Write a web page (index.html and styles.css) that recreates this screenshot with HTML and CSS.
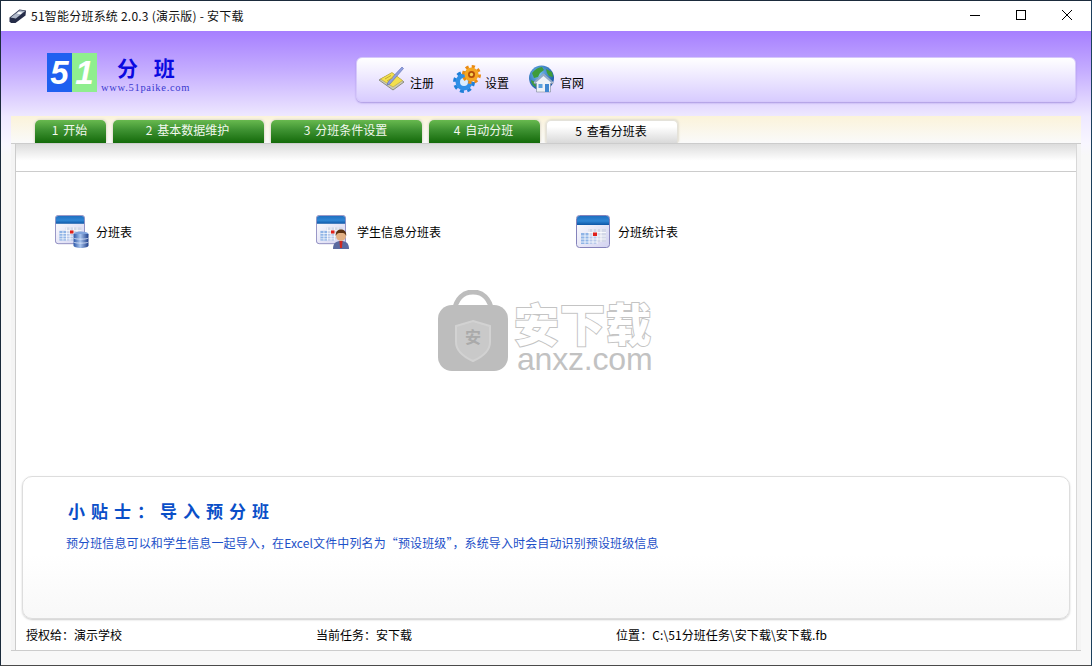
FILE: index.html
```html
<!DOCTYPE html>
<html lang="zh-CN">
<head>
<meta charset="utf-8">
<title>51智能分班系统</title>
<link rel="stylesheet" href="styles.css">
</head>
<body>
<svg class="defs" width="0" height="0" aria-hidden="true">
  <defs>
    <linearGradient id="calHead" x1="0" y1="0" x2="0" y2="1"><stop offset="0" stop-color="#1f6fc0"/><stop offset=".55" stop-color="#2f86d4"/><stop offset="1" stop-color="#0d56a6"/></linearGradient>
    <linearGradient id="calBody" x1="0" y1="0" x2="1" y2="1"><stop offset="0" stop-color="#ffffff"/><stop offset="1" stop-color="#d2d2f0"/></linearGradient>
    <linearGradient id="db" x1="0" y1="0" x2="1" y2="0"><stop offset="0" stop-color="#2b57a8"/><stop offset=".45" stop-color="#a8c4ee"/><stop offset="1" stop-color="#1f3f8a"/></linearGradient>
    <radialGradient id="globe" cx=".4" cy=".35" r=".7"><stop offset="0" stop-color="#7cc4f4"/><stop offset="1" stop-color="#0f4f9e"/></radialGradient>
    <symbol id="cal" viewBox="0 0 34 34">
      <rect x=".5" y=".5" width="33" height="32" rx="3" fill="url(#calBody)" stroke="#8583bb"/>
      <path d="M1 10V3.500A2.500 2.500 0 0 1 3.500 1h27A2.500 2.500 0 0 1 33 3.500V10Z" fill="url(#calHead)"/>
      <path d="M12 14h18v13H12Z" fill="#d3d8e8"/>
      <path d="M5 18h8v11H5Z" fill="#8fb4e6"/>
      <path d="M13 20h8v9h-8Z" fill="#b7c8ea"/>
      <path d="M5 21h25M5 24h25M5 27h16M9 18v11M13 14v15M17 14v15M21 14v15M25 14v13M12 17.500h18" stroke="#ffffff" stroke-width=".8" fill="none"/>
      <rect x="17" y="17.500" width="4" height="3.500" fill="#e0201a"/>
    </symbol>
  </defs>
</svg>
<div class="window">
  <div class="titlebar">
    <svg class="app-icon" width="18" height="16" viewBox="0 0 18 16">
      <path d="M.5 9.500 10.500 1.500l6.500 1-.5 5-10 7.500H2L.5 13.500Z" fill="#252c48"/>
      <path d="M1.500 9.500 10.800 2.200l5.400.8L6.800 10.500Z" fill="#aeb7c8"/>
      <path d="M9.500 4l4 .6-2 1.600-3.700-.6Z" fill="#ffffff"/>
    </svg>
    <span class="title-text">51智能分班系统 2.0.3 (演示版) - 安下载</span>
    <div class="win-controls">
      <svg width="12" height="12" viewBox="0 0 12 12"><path d="M1 6.500h10" stroke="#000" fill="none"/></svg>
      <svg width="12" height="12" viewBox="0 0 12 12"><rect x="1.500" y="1.500" width="9" height="9" stroke="#000" fill="none"/></svg>
      <svg width="12" height="12" viewBox="0 0 12 12"><path d="M1 1l10 10M11 1 1 11" stroke="#000" fill="none"/></svg>
    </div>
  </div>

  <div class="shell">
    <header class="header">
      <div class="logo">
        <div class="logo-mark"><span class="logo-five">5</span><span class="logo-one">1</span></div>
        <div class="logo-text">
          <div class="logo-name">分 班</div>
          <div class="logo-url">www.51paike.com</div>
        </div>
      </div>
      <nav class="toolbar">
        <a class="tool">
          <svg width="28" height="28" viewBox="0 0 28 28">
            <path d="M1 15 14 8l12 9-11 8Z" fill="#c9c9b8" stroke="#8d8d80"/>
            <path d="M2.500 14 14 7.500l10.500 8L15 22Z" fill="#f3df4e" stroke="#b8a53a" stroke-width=".6"/>
            <path d="M10 17 24 2l1.500 1.500L12 19l-3 1Z" fill="#8f9fe0" stroke="#5a6ab0" stroke-width=".6"/>
            <path d="M7 14l6-3.500M9 16l6-3.500" stroke="#c4ae30" fill="none"/>
          </svg>
          <span>注册</span>
        </a>
        <a class="tool">
          <svg width="28" height="28" viewBox="0 0 28 28">
            <circle cx="11" cy="17" r="9.500" fill="none" stroke="#1f7fd8" stroke-width="3" stroke-dasharray="4 3.460"/>
            <circle cx="11" cy="17" r="8.500" fill="#2f8fe6"/>
            <circle cx="11" cy="17" r="4" fill="#d8ecff"/>
            <circle cx="18.500" cy="9.500" r="8" fill="none" stroke="#e98a12" stroke-width="3" stroke-dasharray="3.200 3.080"/>
            <circle cx="18.500" cy="9.500" r="7" fill="#f5a623"/>
            <circle cx="18.500" cy="9.500" r="3.500" fill="#b34d0a"/>
            <circle cx="18.500" cy="9.500" r="1.700" fill="#f9d34c"/>
          </svg>
          <span>设置</span>
        </a>
        <a class="tool">
          <svg width="28" height="28" viewBox="0 0 28 28">
            <circle cx="13.500" cy="13" r="12.500" fill="url(#globe)"/>
            <path d="M4 8c3-4 7-6 10-6l2 3-4 3-2 4-4 1ZM18 4l6 3 1 5-4-1-2-3ZM3 15l4 2 1 5c-3-1-5-4-5-7Z" fill="#3f9c3a"/>
            <path d="M6 17 15.500 8.500 25 17v1.500h-2.500V27h-14v-8.500H6Z" fill="#eef1f6" stroke="#7c8698" stroke-width=".6"/>
            <path d="M15.500 8.500 25 17l-1.500 1-8-7-8 7L6 17Z" fill="#8fa8c8"/>
            <rect x="17" y="19" width="4" height="8" fill="#3f86cf"/>
            <rect x="10.500" y="19" width="4" height="4" fill="#5aa0dd"/>
          </svg>
          <span>官网</span>
        </a>
      </nav>
    </header>

    <div class="tabstrip">
      <a class="tab tab-s">1 开始</a>
      <a class="tab tab-l">2 基本数据维护</a>
      <a class="tab tab-l">3 分班条件设置</a>
      <a class="tab tab-m">4 自动分班</a>
      <a class="tab tab-active">5 查看分班表</a>
    </div>

    <main class="panel">
      <div class="panel-inner">
        <div class="band"></div>
        <div class="reports">
          <a class="report report-a">
            <svg width="34" height="34" viewBox="0 0 34 34">
              <use href="#cal" width="30" height="30"/>
              <ellipse cx="26" cy="19" rx="7.500" ry="2.500" fill="#7ea2dc"/>
              <path d="M18.500 19v11.500c0 1.500 3.400 2.500 7.500 2.500s7.500-1 7.500-2.500V19Z" fill="url(#db)"/>
              <path d="M18.500 23c1 1.500 14 1.500 15 0M18.500 27c1 1.500 14 1.500 15 0" stroke="#dfe9fa" stroke-width=".8" fill="none"/>
            </svg>
            <span>分班表</span>
          </a>
          <a class="report report-b">
            <svg width="34" height="34" viewBox="0 0 34 34">
              <use href="#cal" width="30" height="30"/>
              <path d="M17 34c0-6 3-8 8-8s8 2 8 8Z" fill="#5a6aa0"/>
              <path d="M23.500 26h3l-.5 7h-2Z" fill="#d02a20"/>
              <circle cx="25" cy="21" r="5" fill="#e3b184"/>
              <path d="M19.800 21c-.5-5 2.500-6.500 5.200-6.500s5.700 1.500 5.200 6.500c-1-2.500-2-3-5.200-3s-4.200.5-5.200 3Z" fill="#5b3212"/>
            </svg>
            <span>学生信息分班表</span>
          </a>
          <a class="report report-c">
            <svg width="34" height="34" viewBox="0 0 34 34"><use href="#cal" width="34" height="34"/></svg>
            <span>分班统计表</span>
          </a>
        </div>

        <section class="tip">
          <h2 class="tip-title">小贴士：导入预分班</h2>
          <p class="tip-body">预分班信息可以和学生信息一起导入，在Excel文件中列名为“预设班级”，系统导入时会自动识别预设班级信息</p>
        </section>

        <footer class="status">
          <span class="status-a">授权给：演示学校</span>
          <span class="status-b">当前任务：安下载</span>
          <span class="status-c">位置：C:\51分班任务\安下载\安下载.fb</span>
        </footer>

        <div class="watermark">
          <svg width="70" height="81" viewBox="0 0 70 81">
            <path d="M16 22C18 8 26 2 35 2s17 6 19 20" fill="none" stroke="#bdbdbd" stroke-width="5"/>
            <rect x="0" y="15" width="70" height="66" rx="14" fill="#bdbdbd"/>
            <path d="M35 31l17 5v16c0 9-8 15-17 19-9-4-17-10-17-19V36Z" fill="#c9c9c9" stroke="#d2d2d2" stroke-width="2"/>
          </svg>
          <span class="wm-shield">安</span>
          <div class="wm-text">
            <div class="wm-cn">安下载</div>
            <div class="wm-en">anxz.com</div>
          </div>
        </div>
      </div>
    </main>
  </div>
</div>
</body>
</html>
```
FILE: styles.css
```css
* { box-sizing: border-box; }
html, body { margin: 0; padding: 0; width: 1092px; height: 666px; overflow: hidden; }
body { font-family: "Noto Sans CJK SC", "Liberation Sans", sans-serif; font-size: 12px; color: #000; }
.defs { position: absolute; }

.window {
  width: 1092px; height: 666px; display: flex; flex-direction: column;
  border: 1px solid #1b2b3c; border-right-color: #1b3f5c; border-bottom-color: #4a4a4a;
  background: #f8f8f8;
}

.titlebar { height: 30px; flex: none; display: flex; align-items: center; background: #fff; padding-left: 8px; }
.app-icon { flex: none; margin-right: 4px; margin-top: -1px; }
.title-text { font-size: 12px; line-height: 16px; margin-top: -1px; color: #111; letter-spacing: .22px; }
.win-controls { margin-left: auto; display: flex; gap: 34px; padding-right: 18px; margin-top: -2px; }
.win-controls svg { display: block; width: 12px; height: 12px; }

.shell {
  flex: 1; min-height: 0; display: flex; flex-direction: column;
  background: linear-gradient(#a67fff 0, #c5adff 40px, #eee8ff 85px, #f8f6ff 112px, #f8f8f8 125px);
}

.header { height: 85px; flex: none; display: flex; justify-content: space-between; padding: 22px 15px 0 46px; }
.logo { display: flex; align-items: flex-start; }
.logo-mark { display: flex; width: 50px; height: 39px; font-family: "Liberation Sans", sans-serif; font-style: italic; font-weight: 700; font-size: 33px; line-height: 39px; color: #fff; text-align: center; }
.logo-five { width: 25px; background: #2060f0; }
.logo-one { width: 25px; background: #8fee8f; }
.logo-text { margin-left: 4px; }
.logo-name { height: 29px; padding-left: 16px; font-size: 21px; line-height: 28px; font-weight: 700; color: #0a0ae0; letter-spacing: 5.500px; white-space: nowrap; }
.logo-url { font-family: "Liberation Serif", serif; font-size: 10.500px; line-height: 12px; color: #3a3ad0; letter-spacing: .7px; white-space: nowrap; }

.toolbar {
  width: 720px; height: 45px; margin-top: 4px; display: flex; padding-left: 21px; gap: 19px;
  border: 1px solid #d6c8fb; border-radius: 6px;
  background: linear-gradient(#ffffff, #d8ccff);
  box-shadow: 0 1px 2px #a794e0;
}
.tool { display: flex; align-items: center; gap: 4px; height: 44px; color: #000; }
.tool svg { flex: none; margin-top: -3px; }
.tool span { line-height: 16px; margin-top: 6px; }

.tabstrip {
  height: 27px; flex: none; margin: 0 10px; display: flex; align-items: flex-end; gap: 7px; padding-left: 24px;
  background: linear-gradient(#fbf3da, #fafafa);
}
.tab {
  height: 23px; display: flex; align-items: center; justify-content: center; border-radius: 5px 5px 0 0;
  color: #f2f8ee; line-height: 14px; padding: 0 2px 3px 0; word-spacing: 2px;
  background: linear-gradient(#68b94f, #3d9131 45%, #146a0a);
  box-shadow: 1px -1px 2px #e3dfd2, -1px 0 2px #e3dfd2;
}
.tab-s { width: 71px; }
.tab-l { width: 151px; }
.tab-m { width: 111px; }
.tab-active { width: 132px; margin-left: -1px; color: #000; background: linear-gradient(#fff 25%, #d9d9d9); border: 1px solid #e4e2da; border-bottom: 0; }

.panel { flex: 1; min-height: 0; margin: 0 10px 14px; padding: 0 4px; display: flex; border-top: 1px solid #ccc; border-bottom: 1px solid #ccc; background: #f4f4f4; }
.panel-inner { position: relative; flex: 1; min-width: 0; display: flex; flex-direction: column; background: #fff; border-left: 1px solid #ccc; border-right: 1px solid #d8d8d8; }

.band { height: 28px; flex: none; background: linear-gradient(#dcdcdc, #fff 62%); border-bottom: 1px solid #ccc; }

.reports { display: flex; padding: 43px 0 0 39px; }
.report { display: flex; align-items: center; gap: 7px; color: #000; }
.report-a { width: 261px; }
.report-b { width: 260px; }
.report-c { gap: 8px; }
.report svg { flex: none; display: block; }
.report span { line-height: 16px; margin-top: -1px; }

.tip {
  height: 143px; flex: none; margin: auto 6px 0 6px; padding: 24px 0 0 43px;
  border: 1px solid #ddd; border-radius: 10px;
  background: linear-gradient(#fff 55%, #f8f8f8);
  box-shadow: 0 1px 2px #ccc;
}
.tip-title { margin: 0; font-size: 17px; line-height: 20px; font-weight: 700; color: #0a4fc8; letter-spacing: 6px; padding-left: 2px; }
.tip-body { margin: 14px 0 0; font-size: 12px; line-height: 16px; color: #1c50c8; letter-spacing: .12px; }

.status { height: 31px; flex: none; display: flex; align-items: center; padding-left: 10px; color: #000; }
.status span { line-height: 16px; }
.status-a { width: 290px; }
.status-b { width: 300px; }
.status-c { letter-spacing: .08px; }

.watermark { position: absolute; left: 422px; top: 146px; display: flex; align-items: flex-start; }
.wm-shield { position: absolute; left: 25px; top: 36px; width: 20px; text-align: center; font-size: 16px; line-height: 20px; font-weight: 700; color: #aaa; }
.wm-text { margin-left: 6px; margin-top: 9px; }
.wm-cn { font-size: 45px; line-height: 47px; font-weight: 900; color: #fff; -webkit-text-stroke: 2px #c4c4c4; paint-order: stroke fill; white-space: nowrap; letter-spacing: 1px; }
.wm-en { font-family: "Liberation Sans", sans-serif; font-size: 32px; line-height: 26px; padding-left: 3px; color: #c2c2c2; white-space: nowrap; letter-spacing: -.2px; }
```
